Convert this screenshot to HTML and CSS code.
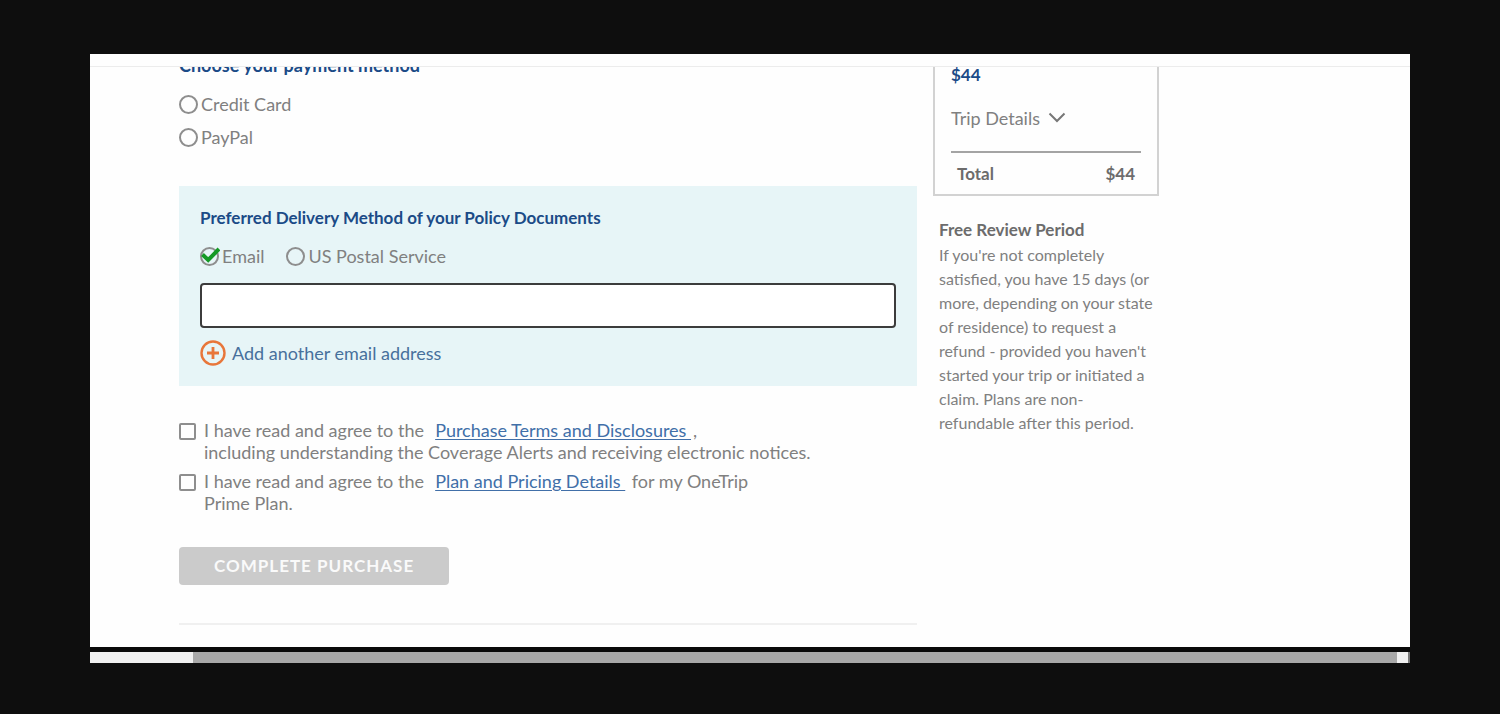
FILE: index.html
```html
<!DOCTYPE html>
<html lang="en">
<head>
<meta charset="utf-8">
<meta name="viewport" content="width=device-width, initial-scale=1">
<title>Complete purchase</title>
<link rel="stylesheet" href="styles.css">
</head>
<body>
<div class="frame">
  <div class="topbar"></div>
  <div class="viewport">
    <form class="main">
      <fieldset class="payment">
        <legend class="heading heading-large">Choose your payment method</legend>
        <label class="choice"><input class="radio" type="radio" name="payment">Credit Card</label>
        <label class="choice"><input class="radio" type="radio" name="payment">PayPal</label>
      </fieldset>

      <section class="delivery">
        <h2 class="heading">Preferred Delivery Method of your Policy Documents</h2>
        <div class="delivery-options">
          <label class="choice">
            <span class="radio-wrap">
              <input class="radio" type="radio" name="delivery" checked>
              <svg class="check" viewBox="0 0 20 20" aria-hidden="true"><path d="M2.5 8.5 8.2 14 19 3" fill="none" stroke="#149a25" stroke-width="4"/></svg>
            </span>Email</label>
          <label class="choice"><input class="radio" type="radio" name="delivery">US Postal Service</label>
        </div>
        <input class="email" type="email" aria-label="Email address">
        <button class="add" type="button">
          <svg class="plus" viewBox="0 0 26 26" aria-hidden="true"><circle cx="13" cy="13" r="11.5" fill="none" stroke="#e8763a" stroke-width="2.4"/><path d="M13 7v12M7 13h12" stroke="#e8763a" stroke-width="2.8"/></svg>
          Add another email address
        </button>
      </section>

      <div class="terms">
        <div class="term">
          <input class="tick" type="checkbox" id="terms">
          <label for="terms">I have read and agree to the&nbsp; <a class="link" href="#">Purchase Terms and Disclosures&nbsp;</a>,<br>including understanding the Coverage Alerts and receiving electronic notices.</label>
        </div>
        <div class="term">
          <input class="tick" type="checkbox" id="pricing">
          <label for="pricing">I have read and agree to the&nbsp; <a class="link" href="#">Plan and Pricing Details&nbsp;</a> for my OneTrip<br>Prime Plan.</label>
        </div>
      </div>

      <button class="submit" type="submit" disabled>COMPLETE PURCHASE</button>
      <hr class="rule">
    </form>

    <aside class="side">
      <section class="summary">
        <p class="price">$44</p>
        <button class="details" type="button">Trip Details
          <svg class="chevron" viewBox="0 0 18 12" aria-hidden="true"><path d="M1.5 1.5l7.5 7.5 7.5-7.5" fill="none" stroke="#777" stroke-width="2"/></svg>
        </button>
        <div class="total"><span>Total</span><span>$44</span></div>
      </section>
      <section class="review">
        <h2 class="review-title">Free Review Period</h2>
        <p class="review-text">If you're not completely satisfied, you have 15 days (or more, depending on your state of residence) to request a refund - provided you haven't started your trip or initiated a claim. Plans are non-refundable after this period.</p>
      </section>
    </aside>
  </div>
  <div class="scrollbar"><div class="thumb"></div><div class="arrow"></div></div>
</div>
</body>
</html>
```
FILE: styles.css
```css
* { box-sizing: border-box; }

body {
  margin: 0;
  padding: 54px 90px 51px;
  background: #0e0e0e;
  color: #808080;
  font-family: Lato, "Open Sans", sans-serif;
  font-size: 18px;
  line-height: 24px;
}

h2, p, fieldset, legend { margin: 0; padding: 0; border: 0; }
input, button { margin: 0; font: inherit; }
button { padding: 0; border: 0; background: none; color: inherit; }

.frame { background: #fefefe; }
.topbar { height: 13px; border-bottom: 1px solid #ececec; }

.viewport {
  display: grid;
  grid-template-columns: minmax(0, 738px) 226px;
  column-gap: 16px;
  padding: 0 89px 22px;
  overflow: hidden;
}

.main { margin-top: -14px; }

.heading {
  color: #1b4b87;
  font-size: 17px;
  font-weight: 700;
}

.heading-large { font-size: 18px; }

.payment .choice { margin-bottom: 9px; }
.payment .heading { margin-bottom: 15px; }

.choice {
  display: flex;
  align-items: center;
  gap: 3px;
}

.radio {
  appearance: none;
  display: block;
  width: 19px;
  height: 19px;
  border: 2px solid #8e8e8e;
  border-radius: 50%;
  background: transparent;
}

.radio-wrap { position: relative; }

.check {
  position: absolute;
  top: -1px;
  left: 0;
  width: 20px;
  height: 20px;
}

.delivery {
  margin-top: 28px;
  padding: 20px 21px;
  background: #e7f5f7;
}

.delivery-options {
  display: flex;
  gap: 22px;
  margin: 14px 0 15px;
}

.email {
  display: block;
  width: 100%;
  height: 45px;
  padding: 0 12px;
  border: 2px solid #3c3c3c;
  border-radius: 4px;
  background: #fff;
  outline: 0;
}

.add {
  display: flex;
  align-items: center;
  gap: 6px;
  margin-top: 12px;
  color: #47709c;
}

.plus { width: 26px; height: 26px; }

.terms {
  display: grid;
  gap: 7px;
  margin-top: 33px;
  line-height: 22px;
}

.term {
  display: grid;
  grid-template-columns: 17px 1fr;
  column-gap: 8px;
}

.tick {
  appearance: none;
  width: 17px;
  height: 17px;
  margin-top: 4px;
  border: 2px solid #8e8e8e;
  border-radius: 2px;
}

.link {
  margin: 0 2px;
  color: #416fa8;
  text-underline-offset: 2px;
}

.submit {
  display: block;
  margin-top: 33px;
  padding: 7px 35px;
  border-radius: 4px;
  background: #cbcbcb;
  color: #fafafa;
  font-size: 17px;
  font-weight: 700;
  letter-spacing: 1px;
}

.rule {
  margin: 38px 0 0;
  border: 0;
  border-top: 2px solid #f0f0f0;
}

.summary {
  margin-top: -13px;
  padding: 7px 16px 8px;
  border: 2px solid #d2d2d2;
}

.price {
  color: #1b4b87;
  font-size: 17px;
  font-weight: 700;
}

.details {
  display: flex;
  align-items: center;
  gap: 8px;
  margin: 19px 0 21px;
}

.chevron { width: 18px; height: 12px; }

.total {
  display: flex;
  justify-content: space-between;
  padding: 9px 6px 0;
  border-top: 2px solid #a4a4a4;
  color: #6c6c6c;
  font-size: 17px;
  font-weight: 700;
}

.review { padding: 21px 4px 0 6px; }

.review-title {
  color: #6c6c6c;
  font-size: 17px;
  font-weight: 700;
  line-height: 26px;
}

.review-text { font-size: 16px; }

.scrollbar {
  display: grid;
  grid-template-columns: 1fr 13px;
  height: 16px;
  padding-left: 103px;
  border-top: 5px solid #0a0a0a;
  background: #f0f0f0;
}

.thumb { background: #a8a8a8; }
.arrow { border-right: 2px solid #777; }
```
